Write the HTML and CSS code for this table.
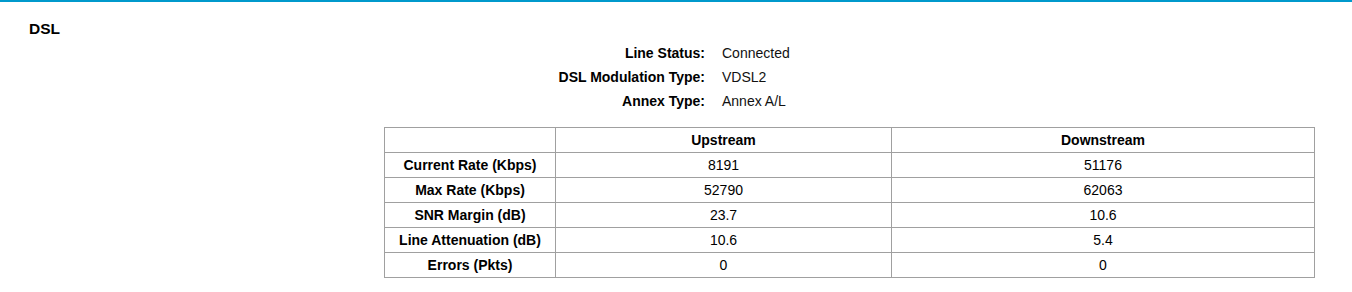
FILE: index.html
```html
<!DOCTYPE html>
<html>
<head>
<meta charset="utf-8">
<link rel="stylesheet" href="styles.css">
</head>
<body>
<div class="topbar"></div>
<div class="panel">
  <h2 class="title">DSL</h2>
  <div class="info">
    <div class="label">Line Status:</div><div class="value">Connected</div>
    <div class="label">DSL Modulation Type:</div><div class="value">VDSL2</div>
    <div class="label">Annex Type:</div><div class="value">Annex A/L</div>
  </div>
  <table class="stats">
    <colgroup><col class="c1"><col class="c2"><col class="c3"></colgroup>
    <tr><th></th><th>Upstream</th><th>Downstream</th></tr>
    <tr><th>Current Rate (Kbps)</th><td>8191</td><td>51176</td></tr>
    <tr><th>Max Rate (Kbps)</th><td>52790</td><td>62063</td></tr>
    <tr><th>SNR Margin (dB)</th><td>23.7</td><td>10.6</td></tr>
    <tr><th>Line Attenuation (dB)</th><td>10.6</td><td>5.4</td></tr>
    <tr><th>Errors (Pkts)</th><td>0</td><td>0</td></tr>
  </table>
</div>
</body>
</html>
```

FILE: styles.css
```css
html, body {
  margin: 0;
  padding: 0;
  background: #fff;
}
body {
  font-family: "Liberation Sans", Arial, sans-serif;
  font-size: 14px;
  color: #000;
}
.topbar {
  height: 2px;
  background: #0099cc;
}
.panel {
  padding: 0 0 0 29px;
}
.title {
  margin: 0;
  padding-top: 19px;
  font-size: 15.5px;
  font-weight: bold;
  line-height: 16px;
  height: 20px;
}
.info {
  display: grid;
  grid-template-columns: 676px auto;
  column-gap: 17px;
  grid-auto-rows: 24px;
  align-items: center;
}
.label {
  text-align: right;
  font-weight: bold;
}
.value {
  color: #111;
}
.stats {
  margin: 14px 0 0 355px;
  border-collapse: collapse;
  table-layout: fixed;
  width: 930px;
}
.c1 { width: 171px; }
.c2 { width: 336px; }
.c3 { width: 423px; }
.stats th, .stats td {
  border: 1px solid #a0a0a0;
  height: 24px;
  padding: 0;
  text-align: center;
  vertical-align: middle;
  line-height: 16px;
}
.stats th {
  font-weight: bold;
}
```
